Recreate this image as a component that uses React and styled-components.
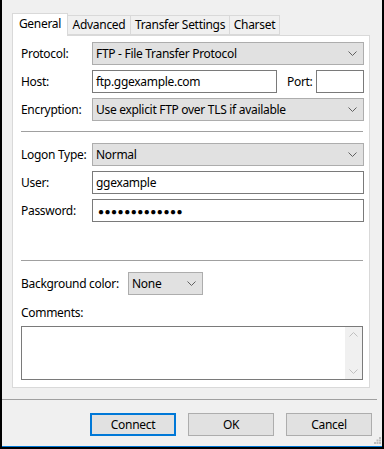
import React from 'react';
import styled, { createGlobalStyle } from 'styled-components';

const GlobalStyle = createGlobalStyle`
    html, body {
        margin: 0;
        padding: 0;
        background: #f0f0f0;
    }
    body {
        font-family: "Noto Sans", "Liberation Sans", sans-serif;
        font-size: 12px;
        letter-spacing: -0.3px;
        color: #000;
    }
`;

const Frame = styled.div`
    position: relative;
    box-sizing: border-box;
    width: 384px;
    height: 449px;
    border-left: 2px solid #000;
    border-right: 2px solid #000;
    border-bottom: 2px solid #000;
    box-shadow: inset 0 -1px 0 #0078d7;
    background: #f0f0f0;
    padding-top: 13px;
    display: flex;
    flex-direction: column;
`;

const Tabs = styled.div`
    display: flex;
    align-items: flex-end;
    height: 22px;
    margin-left: 10px;
    position: relative;
    z-index: 1;
`;

const Tab = styled.div`
    box-sizing: border-box;
    width: ${p => p.w}px;
    height: ${p => (p.active ? 23 : 20)}px;
    margin-bottom: ${p => (p.active ? -1 : 0)}px;
    margin-left: ${p => (p.first ? 0 : -1)}px;
    border: 1px solid #d9d9d9;
    border-bottom: ${p => (p.active ? 'none' : '1px solid #d9d9d9')};
    background: ${p => (p.active ? '#fff' : '#f0f0f0')};
    display: flex;
    align-items: center;
    justify-content: center;
    padding-bottom: ${p => (p.active ? 2 : 0)}px;
    line-height: 16px;
    position: relative;
    z-index: ${p => (p.active ? 2 : 1)};
`;

const Panel = styled.div`
    box-sizing: border-box;
    width: 358px;
    height: 353px;
    margin-left: 10px;
    border: 1px solid #d9d9d9;
    background: #fff;
    padding: 6px 5px 7px 8px;
    display: flex;
    flex-direction: column;
`;

const Row = styled.div`
    display: flex;
    align-items: center;
    height: 23px;
    margin-top: ${p => p.gap ?? 5}px;
`;

const Label = styled.div`
    width: ${p => p.w ?? 71}px;
    flex-shrink: 0;
    line-height: 16px;
    white-space: nowrap;
`;

const SelectBox = styled.div`
    box-sizing: border-box;
    height: 23px;
    width: ${p => (p.w ? `${p.w}px` : 'auto')};
    flex: ${p => (p.w ? '0 0 auto' : '1')};
    background: #e1e1e1;
    border: 1px solid #adadad;
    display: flex;
    align-items: center;
    padding: 0 6px 0 3px;
    line-height: 16px;
    white-space: nowrap;
`;

const SelectText = styled.span`
    flex: 1;
`;

const Input = styled.div`
    box-sizing: border-box;
    height: 23px;
    width: ${p => (p.w ? `${p.w}px` : 'auto')};
    flex: ${p => (p.w ? '0 0 auto' : '1')};
    background: #fff;
    border: 1px solid #7a7a7a;
    display: flex;
    align-items: center;
    padding: 0 3px;
    line-height: 16px;
    white-space: nowrap;
`;

const Dots = styled.span`
    font-size: 10px;
    letter-spacing: 0.5px;
    line-height: 16px;
    padding: 1px 0 0 2px;
`;

const PortLabel = styled.div`
    width: 29px;
    flex-shrink: 0;
    margin-left: 10px;
    line-height: 16px;
`;

const Rule = styled.div`
    height: 1px;
    background: #a0a0a0;
    margin-top: ${p => p.top}px;
    margin-right: ${p => p.right ?? 1}px;
    margin-left: ${p => p.left ?? 0}px;
`;

const CommentsLabel = styled.div`
    margin-top: 10px;
    margin-bottom: 5px;
    line-height: 16px;
`;

const TextArea = styled.div`
    box-sizing: border-box;
    height: 54px;
    margin-right: 1px;
    border: 1px solid #7a7a7a;
    background: #fff;
    display: flex;
    justify-content: flex-end;
`;

const ScrollBar = styled.div`
    width: 17px;
    background: #f0f0f0;
    display: flex;
    flex-direction: column;
    justify-content: space-between;
    align-items: center;
    padding: 5px 0;
`;

const Buttons = styled.div`
    display: flex;
    justify-content: flex-end;
    gap: 12px;
    margin-top: 13px;
    padding-right: 10px;
`;

const Button = styled.div`
    box-sizing: border-box;
    width: 86px;
    height: 23px;
    background: #e1e1e1;
    border: ${p => (p.primary ? '2px solid #0078d7' : '1px solid #adadad')};
    display: flex;
    align-items: center;
    justify-content: center;
    line-height: 16px;
`;

const Grip = styled.svg`
    position: absolute;
    right: 1px;
    bottom: 3px;
`;

function Chevron({ up, color = '#606060' }) {
    return (
        <svg width="9" height="5" viewBox="0 0 9 5">
            <polyline
                points={up ? '0.5,4.5 4.5,0.5 8.5,4.5' : '0.5,0.5 4.5,4.5 8.5,0.5'}
                fill="none"
                stroke={color}
                strokeWidth="1"
            />
        </svg>
    );
}

function Select({ value, w }) {
    return (
        <SelectBox w={w}>
            <SelectText>{value}</SelectText>
            <Chevron />
        </SelectBox>
    );
}

export default function App() {
    return (
        <>
            <GlobalStyle />
            <Frame>
                <Tabs>
                    <Tab first active w={56}>General</Tab>
                    <Tab w={64}>Advanced</Tab>
                    <Tab w={100}>Transfer Settings</Tab>
                    <Tab w={51}>Charset</Tab>
                </Tabs>
                <Panel>
                    <Row gap={0}>
                        <Label>Protocol:</Label>
                        <Select value="FTP - File Transfer Protocol" />
                    </Row>
                    <Row>
                        <Label>Host:</Label>
                        <Input>ftp.ggexample.com</Input>
                        <PortLabel>Port:</PortLabel>
                        <Input w={48} />
                    </Row>
                    <Row>
                        <Label>Encryption:</Label>
                        <Select value="Use explicit FTP over TLS if available" />
                    </Row>
                    <Rule top={10} />
                    <Row gap={11}>
                        <Label>Logon Type:</Label>
                        <Select value="Normal" />
                    </Row>
                    <Row>
                        <Label>User:</Label>
                        <Input>ggexample</Input>
                    </Row>
                    <Row>
                        <Label>Password:</Label>
                        <Input><Dots>●●●●●●●●●●●●●</Dots></Input>
                    </Row>
                    <Rule top={38} />
                    <Row gap={11}>
                        <Label w={107}>Background color:</Label>
                        <Select value="None" w={75} />
                    </Row>
                    <CommentsLabel>Comments:</CommentsLabel>
                    <TextArea>
                        <ScrollBar>
                            <Chevron up color="#c0c0c0" />
                            <Chevron color="#c0c0c0" />
                        </ScrollBar>
                    </TextArea>
                </Panel>
                <Rule top={11} right={5} />
                <Buttons>
                    <Button primary>Connect</Button>
                    <Button>OK</Button>
                    <Button>Cancel</Button>
                </Buttons>
                <Grip width="7" height="7" viewBox="0 0 7 7">
                    <rect x="5" y="0" width="2" height="2" fill="#bcbcbc" />
                    <rect x="2.5" y="2.5" width="2" height="2" fill="#bcbcbc" />
                    <rect x="5" y="2.5" width="2" height="2" fill="#bcbcbc" />
                    <rect x="0" y="5" width="2" height="2" fill="#bcbcbc" />
                    <rect x="2.5" y="5" width="2" height="2" fill="#bcbcbc" />
                    <rect x="5" y="5" width="2" height="2" fill="#bcbcbc" />
                </Grip>
            </Frame>
        </>
    );
}
